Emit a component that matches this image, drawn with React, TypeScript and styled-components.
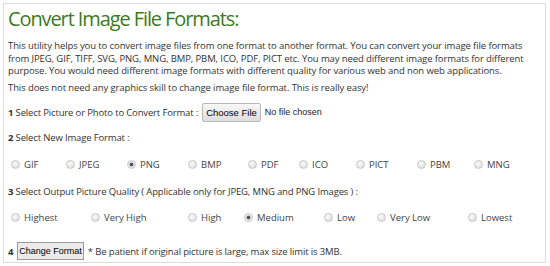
import styled, { createGlobalStyle } from "styled-components";

const GlobalStyle = createGlobalStyle`
  html, body {
    margin: 0;
    padding: 0;
    background: #ffffff;
  }
  body {
    font-family: "Open Sans", "Liberation Sans", sans-serif;
    color: #333333;
  }
`;

const Panel = styled.div`
  margin: 3px 0 0 3px;
  width: 543px;
  height: 260px;
  box-sizing: border-box;
  border: 1px solid #dcdcdc;
  padding: 0 4px;
  overflow: hidden;
`;

const Title = styled.h1`
  margin: 2px 0 0 0;
  font-size: 20px;
  font-weight: 400;
  letter-spacing: -1.1px;
  color: #3d7a1f;
  line-height: 26px;
`;

const Para = styled.p<{ $gap: number }>`
  margin: ${(p) => p.$gap}px 0 0 0;
  font-size: 9.5px;
  letter-spacing: -0.1px;
  line-height: 12.5px;
`;

const Step = styled.div<{ $gap: number }>`
  display: flex;
  align-items: center;
  gap: 4px;
  margin-top: ${(p) => p.$gap}px;
  font-size: 9.5px;
  letter-spacing: -0.15px;
  line-height: 13px;
`;

const Num = styled.b`
  font-weight: 700;
`;

const FileButton = styled.button`
  font-family: "Liberation Sans", Arial, sans-serif;
  font-size: 9.5px;
  height: 19px;
  padding: 0 3px;
  border: 1px solid #b8b8b8;
  border-radius: 2px;
  background: linear-gradient(#f8f8f8, #dddddd);
  color: #000;
`;

const Muted = styled.span`
  font-family: "Liberation Sans", Arial, sans-serif;
  font-size: 9px;
  letter-spacing: 0;
  color: #222;
`;

const RadioRow = styled.div<{ $cols: string; $gap: number }>`
  display: grid;
  grid-template-columns: ${(p) => p.$cols};
  margin-top: ${(p) => p.$gap}px;
  padding-left: 3px;
  font-size: 9.5px;
  line-height: 13px;
`;

const RadioItem = styled.label`
  display: flex;
  align-items: center;
  gap: 4px;
  color: #444;
`;

const Dot = styled.span<{ $on?: boolean }>`
  width: 7px;
  height: 7px;
  border-radius: 50%;
  border: 1px solid #c8c8c8;
  background: ${(p) =>
    p.$on
      ? "radial-gradient(circle, #555 0 1.6px, #e4e4e4 2.2px)"
      : "radial-gradient(circle at 40% 35%, #fbfbfb, #d6d6d6)"};
`;

const ChangeButton = styled.button`
  font-family: "Liberation Sans", Arial, sans-serif;
  font-size: 9px;
  height: 18px;
  padding: 0 1px;
  border: 1px solid #9a9a9a;
  border-radius: 0;
  background: #ebebeb;
  color: #000;
`;

const formats = ["GIF", "JPEG", "PNG", "BMP", "PDF", "ICO", "PICT", "PBM", "MNG"];
const qualities = ["Highest", "Very High", "High", "Medium", "Low", "Very Low", "Lowest"];

export default function App() {
  return (
    <>
      <GlobalStyle />
      <Panel>
        <Title>Convert Image File Formats:</Title>
        <Para $gap={8}>
          This utility helps you to convert image files from one format to another format. You can
          convert your image file formats from JPEG, GIF, TIFF, SVG, PNG, MNG, BMP, PBM, ICO, PDF,
          PICT etc. You may need different image formats for different purpose. You would need
          different image formats with different quality for various web and non web applications.
        </Para>
        <Para $gap={4}>This does not need any graphics skill to change image file format. This is really easy!</Para>
        <Step $gap={9}>
          <span>
            <Num>1</Num> Select Picture or Photo to Convert Format :
          </span>
          <FileButton>Choose File</FileButton>
          <Muted>No file chosen</Muted>
        </Step>
        <Step $gap={9}>
          <span>
            <Num>2</Num> Select New Image Format :
          </span>
        </Step>
        <RadioRow $gap={14} $cols="55px 61px 61px 60px 51px 57px 61px 57px 60px">
          {formats.map((f) => (
            <RadioItem key={f}>
              <Dot $on={f === "PNG"} />
              {f}
            </RadioItem>
          ))}
        </RadioRow>
        <Step $gap={14}>
          <span>
            <Num>3</Num> Select Output Picture Quality ( Applicable only for JPEG, MNG and PNG Images ) :
          </span>
        </Step>
        <RadioRow $gap={13} $cols="80px 97px 56px 80px 53px 91px 70px">
          {qualities.map((q) => (
            <RadioItem key={q}>
              <Dot $on={q === "Medium"} />
              {q}
            </RadioItem>
          ))}
        </RadioRow>
        <Step $gap={18}>
          <span>
            <Num>4</Num>
          </span>
          <ChangeButton>Change Format</ChangeButton>
          <span>* Be patient if original picture is large, max size limit is 3MB.</span>
        </Step>
      </Panel>
    </>
  );
}
